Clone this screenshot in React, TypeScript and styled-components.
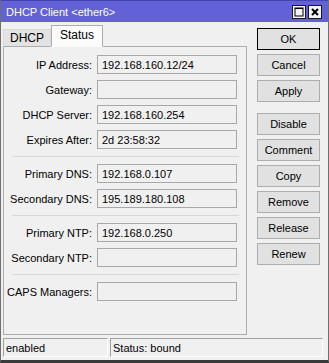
import React from "react";
import styled, { createGlobalStyle } from "styled-components";

const Global = createGlobalStyle`
  html, body { margin: 0; padding: 0; background: #f0f0f0; }
  body { font-family: "Liberation Sans", Arial, sans-serif; font-size: 11px; color: #000; }
  * { box-sizing: border-box; }
`;

const Window = styled.div`
  width: 329px;
  height: 363px;
  display: flex;
  flex-direction: column;
  background: #f0f0f0;
  border-left: 1px solid #6f6f6f;
  border-right: 1px solid #6f6f6f;
  border-bottom: 3px solid #3a3a3a;
`;

const TitleBar = styled.div`
  height: 22px;
  flex: none;
  display: flex;
  align-items: center;
  justify-content: space-between;
  background: #6262d6;
  border-top: 1px solid #4444a8;
  color: #fff;
  padding: 0 6px 0 5px;
  font-size: 11px;
`;

const TitleControls = styled.div`
  display: flex;
  gap: 2px;
  margin-top: 1px;
`;

const CtrlButton = styled.div`
  width: 14px;
  height: 14px;
  border: 1px solid #1a1a1a;
  background: #f4f4f4;
  display: flex;
  align-items: center;
  justify-content: center;
`;

const Main = styled.div`
  flex: 1;
  display: flex;
  gap: 10px;
  padding: 3px 8px 0 2px;
  min-height: 0;
`;

const LeftCol = styled.div`
  width: 244px;
  display: flex;
  flex-direction: column;
`;

const TabStrip = styled.div`
  height: 22px;
  display: flex;
  align-items: flex-end;
  position: relative;
  z-index: 1;
  margin-bottom: -1px;
`;

const Tab = styled.div<{ $active?: boolean }>`
  height: ${(p) => (p.$active ? 22 : 18)}px;
  padding: ${(p) => (p.$active ? "0 8px 3px" : "0 6px 0")};
  display: flex;
  align-items: center;
  justify-content: center;
  background: ${(p) => (p.$active ? "#fbfbfb" : "#e3e3e3")};
  border: 1px solid ${(p) => (p.$active ? "#adadad" : "#d9d9d9")};
  border-bottom: ${(p) => (p.$active ? "1px solid #fbfbfb" : "1px solid #adadad")};
  font-size: 12px;
`;

const Panel = styled.div`
  flex: 1;
  border: 1px solid #adadad;
  display: flex;
  flex-direction: column;
`;

const Section = styled.div<{ $first?: boolean }>`
  display: grid;
  grid-template-columns: 88px 140px;
  column-gap: 5px;
  row-gap: 6px;
  padding: ${(p) => (p.$first ? "8px" : "7px")} 0 7px 0;
`;

const Separator = styled.div`
  height: 1px;
  margin: 0 7px 0 8px;
  background: #d8d8d8;
`;

const Label = styled.div`
  text-align: right;
  align-self: center;
  white-space: nowrap;
  font-size: 11px;
`;

const Field = styled.div`
  height: 19px;
  border: 1px solid #a8a8a8;
  background: #f0f0f0;
  padding: 0 4px;
  display: flex;
  align-items: center;
  font-size: 11px;
  white-space: nowrap;
`;

const ButtonCol = styled.div`
  width: 63px;
  display: flex;
  flex-direction: column;
  gap: 4px;
  padding-top: 3px;
`;

const Button = styled.div<{ $default?: boolean; $spaced?: boolean }>`
  height: 22px;
  display: flex;
  align-items: center;
  justify-content: center;
  background: #e1e1e1;
  border: 1px solid ${(p) => (p.$default ? "#000" : "#adadad")};
  box-shadow: ${(p) => (p.$default ? "inset 0 0 0 1px #e1e1e1" : "none")};
  margin-top: ${(p) => (p.$spaced ? "7px" : "0")};
  font-size: 11px;
`;

const StatusBar = styled.div`
  height: 19px;
  margin: 3px 5px 3px 2px;
  display: flex;
  gap: 2px;
  flex: none;
`;

const StatusCell = styled.div<{ $w: number }>`
  width: ${(p) => p.$w}px;
  border-top: 1px solid #a0a0a0;
  border-left: 1px solid #a0a0a0;
  border-right: 1px solid #ffffff;
  border-bottom: 1px solid #ffffff;
  padding-left: 2px;
  display: flex;
  align-items: center;
  font-size: 11px;
`;

const rows1 = [
  ["IP Address:", "192.168.160.12/24"],
  ["Gateway:", ""],
  ["DHCP Server:", "192.168.160.254"],
  ["Expires After:", "2d 23:58:32"],
];
const rows2 = [
  ["Primary DNS:", "192.168.0.107"],
  ["Secondary DNS:", "195.189.180.108"],
];
const rows3 = [
  ["Primary NTP:", "192.168.0.250"],
  ["Secondary NTP:", ""],
];
const rows4 = [["CAPS Managers:", ""]];

const Rows = ({ rows, first }: { rows: string[][]; first?: boolean }) => (
  <Section $first={first}>
    {rows.map(([l, v]) => (
      <React.Fragment key={l}>
        <Label>{l}</Label>
        <Field>{v}</Field>
      </React.Fragment>
    ))}
  </Section>
);

export default function App() {
  return (
    <>
      <Global />
      <Window>
        <TitleBar>
          <span>DHCP Client &lt;ether6&gt;</span>
          <TitleControls>
            <CtrlButton>
              <svg width="10" height="10" viewBox="0 0 10 10">
                <rect x="1" y="1" width="8" height="8" fill="none" stroke="#000" strokeWidth="1" />
                <line x1="1" y1="1.5" x2="9" y2="1.5" stroke="#000" strokeWidth="1" />
              </svg>
            </CtrlButton>
            <CtrlButton>
              <svg width="10" height="10" viewBox="0 0 10 10">
                <path d="M2 2 L8 8 M8 2 L2 8" stroke="#000" strokeWidth="2" />
              </svg>
            </CtrlButton>
          </TitleControls>
        </TitleBar>
        <Main>
          <LeftCol>
            <TabStrip>
              <Tab>DHCP</Tab>
              <Tab $active>Status</Tab>
            </TabStrip>
            <Panel>
              <Rows rows={rows1} first />
              <Separator />
              <Rows rows={rows2} />
              <Separator />
              <Rows rows={rows3} />
              <Separator />
              <Rows rows={rows4} />
            </Panel>
          </LeftCol>
          <ButtonCol>
            <Button $default>OK</Button>
            <Button>Cancel</Button>
            <Button>Apply</Button>
            <Button $spaced>Disable</Button>
            <Button>Comment</Button>
            <Button>Copy</Button>
            <Button>Remove</Button>
            <Button>Release</Button>
            <Button>Renew</Button>
          </ButtonCol>
        </Main>
        <StatusBar>
          <StatusCell $w={105}>enabled</StatusCell>
          <StatusCell $w={213}>Status: bound</StatusCell>
        </StatusBar>
      </Window>
    </>
  );
}
